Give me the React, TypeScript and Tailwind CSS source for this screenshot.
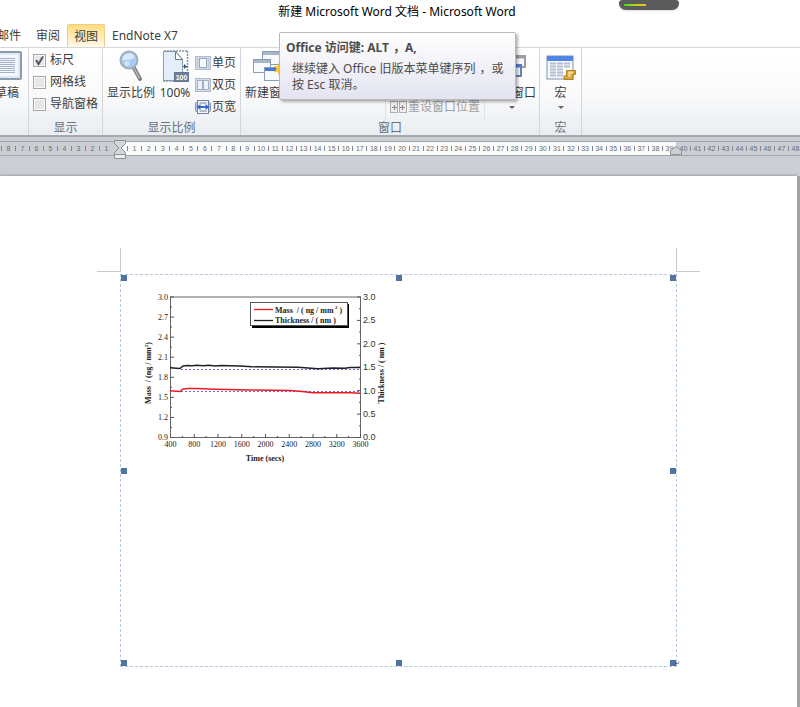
import { Fragment, type ReactNode } from 'react';
import clsx from 'clsx';

const leftRuler = [8, 7, 6, 5, 4, 3, 2, 1];
const textRuler = Array.from({ length: 39 }, (_, i) => i + 1);
const rightRuler = Array.from({ length: 9 }, (_, i) => i + 40);

const massTicks = ['3.0', '2.7', '2.4', '2.1', '1.8', '1.5', '1.2', '0.9'];
const thicknessTicks = ['3.0', '2.5', '2.0', '1.5', '1.0', '0.5', '0.0'];
const timeTicks = [400, 800, 1200, 1600, 2000, 2400, 2800, 3200, 3600];

function DraftIcon() {
  return (
    <svg width="30" height="30" viewBox="0 0 30 30">
      <rect x="1" y="1" width="28" height="27" rx="1" fill="#dfe7f1" stroke="#8c9bb0" strokeWidth="2" />
      <rect x="4" y="4" width="22" height="21" fill="#f4f8fc" />
      <path d="M6 7.500h17M6 9.500h17M6 11.500h17M6 13.500h17M6 15.500h17M6 17.500h17M6 19.500h17M6 21.500h17" stroke="#a3b2ca" />
    </svg>
  );
}

function ZoomIcon() {
  return (
    <svg width="30" height="32" viewBox="0 0 30 32">
      <path d="M18 18l6 11" stroke="#7d7d80" strokeWidth="4" strokeLinecap="round" />
      <path d="M18 18l5.500 10.500" stroke="#bdbdc0" strokeWidth="1.500" />
      <circle cx="13" cy="10" r="8.500" fill="#a9cdf0" stroke="#a4aebb" strokeWidth="2" />
      <path d="M6.500 10.500a6.500 6.500 0 0 1 12-4c-2 4-8 3-12 4z" fill="#d8eafa" />
      <circle cx="11" cy="13.500" r="2.500" fill="#cfe4f8" />
    </svg>
  );
}

function HundredIcon() {
  return (
    <svg width="28" height="32" viewBox="0 0 28 32">
      <path d="M2.500 1.500h12l7 8v21h-19z" fill="#e4eef9" stroke="#8c9cb3" />
      <path d="M14.500 1.500v8h7z" fill="#fff" stroke="#66788f" />
      <path d="M3 1h24M26.500 1v20M2 31h12" stroke="#8593a8" strokeWidth="1.500" strokeDasharray="2 1" />
      <path d="M22 16.500h5" stroke="#3e5675" />
      <path d="M23 14l3 2.500-3 2.500z" fill="#3e5675" />
      <rect x="13.500" y="22.500" width="14" height="9" fill="#6f829b" stroke="#61758f" />
      <text x="20.500" y="30" textAnchor="middle" fontSize="7" fontWeight="700" fontFamily="Liberation Sans, sans-serif" fill="#fff">100</text>
    </svg>
  );
}

function PageIcon({ kind }: { kind: 'one' | 'two' | 'width' }) {
  return (
    <svg width="16" height="16" viewBox="0 0 16 16" className="shrink-0">
      {kind !== 'width' && (
        <rect x=".5" y="1.500" width="15" height="13" fill="#d3dce8" stroke="#b0bccd" />
      )}
      {kind === 'one' && (
        <>
          <rect x="4.500" y="3.500" width="7" height="9" fill="#f7fafd" stroke="#98a7bd" />
          <path d="M2.500 3v10M13.500 3v10" stroke="#bcc8d8" />
        </>
      )}
      {kind === 'two' && (
        <>
          <rect x="2.500" y="3.500" width="5" height="9" fill="#eef3f9" stroke="#a3b0c4" />
          <rect x="8.500" y="3.500" width="5" height="9" fill="#eef3f9" stroke="#a3b0c4" />
        </>
      )}
      {kind === 'width' && (
        <>
          <rect x=".5" y="3.500" width="15" height="9" rx="1" fill="#b9c8de" stroke="#8297b8" />
          <rect x="2.500" y="1.500" width="11" height="13" fill="#f4f8fd" stroke="#6c82a5" />
          <path d="M4.500 4h7M4.500 12h7" stroke="#6c7f9d" />
          <path d="M1.500 8l4-3v2h5V5l4 3-4 3V9h-5v2z" fill="#3468cc" />
        </>
      )}
    </svg>
  );
}

function MiniWindow({ x, y, blue }: { x: number; y: number; blue?: boolean }) {
  return (
    <>
      <rect x={x + 0.5} y={y + 0.5} width="17" height="13" fill="#f6f9fd" stroke="#8c9cb4" />
      <rect x={x + 1} y={y + 1} width="16" height="3" fill={blue ? '#4478dd' : '#a9b6c8'} />
    </>
  );
}

function WindowsIcon() {
  return (
    <svg width="32" height="32" viewBox="0 0 32 32">
      <MiniWindow x={9} y={1} />
      <MiniWindow x={0} y={9} />
      <MiniWindow x={11} y={17} blue />
      <path d="M26 13l1 4 4-1-3 3 3 3-4-1-1 4-1-4-4 1 3-3-3-3 4 1z" fill="#ffd028" stroke="#f0a510" strokeWidth=".5" />
    </svg>
  );
}

function SwitchIcon() {
  return (
    <svg width="30" height="32" viewBox="0 0 30 32">
      <rect x="9" y="6" width="19" height="11" fill="#fafafa" stroke="#9b9da1" strokeWidth="2" />
      <path d="M8 7h21" stroke="#9b9da1" strokeWidth="3" />
      <rect x="5" y="15" width="19" height="11" fill="#eef5fd" stroke="#6883a8" strokeWidth="2" />
      <path d="M4 16h21" stroke="#4a7ee0" strokeWidth="3" />
    </svg>
  );
}

function MacroIcon() {
  return (
    <svg width="30" height="30" viewBox="0 0 30 30">
      <rect x="1" y="5" width="26" height="23" fill="#f6f9fd" stroke="#7f93b2" />
      <rect x="1" y="5" width="26" height="5" fill="#5286e6" />
      <path d="M4 12.500h6M11 12.500h6M18 12.500h6M4 15.500h6M11 15.500h6M18 15.500h6M4 18.500h6M11 18.500h6M4 21.500h6M11 21.500h6M4 24.500h6M11 24.500h6" stroke="#b4bfd4" strokeWidth="2" />
      <path d="M20.500 19.500h9v4h-2.500v5h-9v-3.500h2.500z" fill="#dba638" stroke="#b08226" />
      <path d="M22 21.500h5M23.500 22v4" fill="none" stroke="#f8df8c" strokeWidth="2" />
    </svg>
  );
}

function ResetIcon() {
  return (
    <svg width="17" height="14" viewBox="0 0 17 14">
      <rect x=".5" y="1.500" width="7" height="11" fill="#eee" stroke="#b0b0b0" />
      <rect x="9.500" y="1.500" width="7" height="11" fill="#eee" stroke="#b0b0b0" />
      <path d="M2 7.500h5M4.500 5v5M10 7.500h5M12.500 5v5" stroke="#8a8a8a" />
    </svg>
  );
}

function Arrow() {
  return <span className="mt-1 block border-x-3 border-t-3 border-x-transparent border-t-[#666]" />;
}

function Group({ label, className, children }: { label: string; className?: string; children: ReactNode }) {
  return (
    <section className={clsx('flex shrink-0 flex-col border-r border-[#d3d7dc]', className)}>
      <div className="flex h-[72px] shrink-0">{children}</div>
      <h2 className="shrink-0 text-center leading-4 text-[#68707c]">{label}</h2>
    </section>
  );
}

function BigButton({ icon, label, arrow, className }: { icon: ReactNode; label: string; arrow?: boolean; className?: string }) {
  return (
    <button className={clsx('flex shrink-0 flex-col items-center whitespace-nowrap', className)}>
      <span className="flex h-9 items-center">{icon}</span>
      <span className="leading-[18px]">{label}</span>
      {arrow && <Arrow />}
    </button>
  );
}

function Check({ label, checked }: { label: string; checked?: boolean }) {
  return (
    <label className="flex h-[22px] items-center gap-1">
      <input
        type="checkbox"
        defaultChecked={checked}
        className="peer size-[13px] appearance-none border border-[#a4a7ab] bg-[#e6e7e8] shadow-[inset_0_0_0_1px_#fafafa]"
      />
      <svg viewBox="0 0 13 13" className="pointer-events-none invisible -ml-[17px] size-[13px] peer-checked:visible">
        <path d="M3 6l2.500 4L10 2.500" fill="none" stroke="#55585f" strokeWidth="2" />
      </svg>
      {label}
    </label>
  );
}

function RulerCell({ n, className }: { n: number; className?: string }) {
  return (
    <span className={clsx('flex h-full items-center', className)}>
      <i className="h-[5px] w-px shrink-0 bg-[#84888e]" />
      <span className="flex min-w-0 flex-1 justify-center">{n}</span>
    </span>
  );
}

function Ruler() {
  return (
    <div className="flex h-[39px] items-start bg-[#cbcfd4] pt-1">
      <div className="flex h-[15px] flex-1 border-y border-[#a1a6ad] font-['Liberation_Sans',sans-serif] text-[7px] leading-none text-[#6a6e74]">
        <div className="flex w-[120px] shrink-0 justify-end pr-[7px]">
          {leftRuler.map((n) => <RulerCell key={n} n={n} className="w-[14px] shrink-0" />)}
        </div>
        <div className="relative flex w-[556px] shrink-0 bg-[#fafafa] pl-[7px]">
          {textRuler.map((n) => <RulerCell key={n} n={n} className="min-w-0 flex-1" />)}
          <svg width="12" height="19" viewBox="0 0 12 19" className="absolute -top-[2px] -left-[6px]">
            <path d="M.5 .5h11v3l-4.500 4.500 4.500 4.500v2H.5v-2L5 8 .5 3.500z" fill="#d5d6d9" stroke="#8d9095" />
            <path d="M.5 14.500h11v4H.5z" fill="#eceded" stroke="#8d9095" />
          </svg>
          <svg width="12" height="10" viewBox="0 0 12 10" className="absolute -right-[6px] -bottom-[1px]">
            <path d="M.5 8.500v-4L6 .5l5.500 4v4z" fill="#d0d1d3" stroke="#8d9095" />
          </svg>
        </div>
        <div className="flex min-w-0 flex-1 overflow-hidden">
          {rightRuler.map((n) => <RulerCell key={n} n={n} className="w-[14px] shrink-0 first:[&>i]:invisible" />)}
        </div>
      </div>
    </div>
  );
}

function Chart() {
  return (
    <svg width="270" height="185" viewBox="130 285 270 185" fontFamily="Liberation Serif, serif" fontSize="8" fill="#222">
      <rect x="170.500" y="297" width="190" height="140.500" fill="none" stroke="#666" />
      {massTicks.map((t, i) => (
        <Fragment key={t}>
          <text x="168" y={299.5 + i * 20.07} textAnchor="end">{t}</text>
          <path d={`M170 ${297 + i * 20.07}h4${i < 7 ? 'm-4 10h2' : ''}`} stroke="#555" />
        </Fragment>
      ))}
      {thicknessTicks.map((t, i) => (
        <Fragment key={t}>
          <text x="363" y={(i === 6 ? 299 : 300) + i * 23.42} fontSize="9" fontFamily="Liberation Sans, sans-serif" fill="#333">{t}</text>
          <path d={`M361 ${297 + i * 23.42}h-4${i < 6 ? 'm4 11.700h-2' : ''}`} stroke="#555" />
        </Fragment>
      ))}
      {timeTicks.map((t, i) => (
        <Fragment key={t}>
          <text x={170.5 + i * 23.75} y="447" textAnchor="middle">{t}</text>
          <path d={`M${170.5 + i * 23.75} 438v-4${i < 8 ? 'm11.900 4v-2' : ''}`} stroke="#555" />
        </Fragment>
      ))}

      <path d="M181 369.500H360M181 391.500H360" stroke="#6a6af0" strokeDasharray="2 2" />
      <path
        d="M170 367.800L180 368.500L183 366L187 365.500L192 365.800L197 365.200L203 365.700L209 365.300L215 366L221 365.500L240 366L252 366.800L275 367L298 367.200L318 368.700L333 368L345 368.200L350 367.500H360"
        fill="none" stroke="#222" strokeWidth="1.400"
      />
      <path
        d="M170 390.700L180 391.500L183 389L188 388.500L197 388.500L215 389.200L250 390L270 390.300L290 390.500L302 391.500L313 392.700H350L360 393.300"
        fill="none" stroke="#f01820" strokeWidth="1.400"
      />

      <rect x="252" y="304" width="97" height="24" fill="#000" />
      <rect x="250.500" y="302.500" width="97" height="23" fill="#fff" stroke="#555" />
      <path d="M254 309.500h19" stroke="#f01820" strokeWidth="1.300" />
      <path d="M254 320.500h19" stroke="#222" strokeWidth="1.300" />
      <g fontWeight="700">
        <text x="275" y="313" xmlSpace="preserve">Mass  / ( ng / mm<tspan dy="-4" fontSize="5"> 2</tspan><tspan dy="4"> )</tspan></text>
        <text x="275" y="323">Thickness / ( nm )</text>
        <text x="265" y="461" textAnchor="middle">Time (secs)</text>
        <text transform="translate(151 373) rotate(-90)" textAnchor="middle" xmlSpace="preserve">Mass  / (ng / mm<tspan dy="-3" fontSize="5">2</tspan><tspan dy="3">)</tspan></text>
        <text transform="translate(384 373) rotate(-90)" textAnchor="middle">Thickness / ( nm )</text>
      </g>
    </svg>
  );
}

// resize grips on the drawing canvas
const handles = [
  'left-0 top-0',
  'left-1/2 top-0 -translate-x-1/2',
  'right-0 top-0',
  'left-0 top-1/2 -translate-y-1/2',
  'right-0 top-1/2 -translate-y-1/2',
  'left-0 bottom-0',
  'left-1/2 bottom-0 -translate-x-1/2',
  'right-0 bottom-0',
];

// full-width comma with room on its left
function Comma() {
  return <span className="pl-1 font-['Noto_Sans_CJK_SC',sans-serif]">，</span>;
}

export default function App() {
  return (
    <div lang="zh-CN" className="relative flex min-h-screen flex-col overflow-x-hidden bg-white font-['Noto_Sans','Noto_Sans_CJK_SC',sans-serif] text-[12px] text-[#3c3c3c]">
      <header className="relative flex h-6 items-end justify-center pr-1.5 text-black">
        <h1 className="leading-6">新建 Microsoft Word 文档 - Microsoft Word</h1>
        <div className="absolute top-0 right-[121px] h-[10px] w-[60px] rounded-b-lg rounded-t-sm bg-[#5b5b5b] px-[5px] pt-1 shadow">
          <div className="h-[2px] w-[22px] bg-linear-to-r from-[#20e020] to-[#ffc010]" />
        </div>
      </header>

      <nav className="flex h-[23px] shrink-0 items-stretch leading-6">
        <a href="#mail" className="flex w-[21px] justify-end overflow-hidden whitespace-nowrap">邮件</a>
        <a href="#review" className="ml-[15px]">审阅</a>
        <a href="#view" className="ml-[7px] w-[38px] rounded-t-xs border border-b-0 border-[#f0cf85] bg-linear-to-b from-[#ffdc7c] to-[#fffaec] text-center">视图</a>
        <a href="#endnote" className="ml-[7px]">EndNote X7</a>
      </nav>

      <div className="flex h-[90px] shrink-0 border-t border-b-2 border-t-[#d5d7da] border-b-[#a6abb1] bg-linear-to-b from-white via-[#fbfbfc] to-[#e9edf1]">
        <section className="flex w-[29px] shrink-0 justify-end overflow-hidden border-r border-[#d3d7dc] pr-[6px]">
          <BigButton icon={<DraftIcon />} label="草稿" className="w-[30px]" />
        </section>
        <Group label="显示" className="w-[74px]">
          <div className="pt-px pl-1">
            <Check label="标尺" checked />
            <Check label="网格线" />
            <Check label="导航窗格" />
          </div>
        </Group>
        <Group label="显示比例" className="w-[138px]">
          <BigButton icon={<ZoomIcon />} label="显示比例" className="w-14" />
          <BigButton icon={<HundredIcon />} label="100%" className="w-8" />
          <div className="flex flex-col pt-1 pl-1">
            <button className="flex h-[22px] items-center gap-px whitespace-nowrap"><PageIcon kind="one" />单页</button>
            <button className="flex h-[22px] items-center gap-px whitespace-nowrap"><PageIcon kind="two" />双页</button>
            <button className="flex h-[22px] items-center gap-px whitespace-nowrap"><PageIcon kind="width" />页宽</button>
          </div>
        </Group>
        <Group label="窗口" className="w-[299px]">
          <BigButton icon={<WindowsIcon />} label="新建窗口" className="w-14" />
          <div className="ml-auto flex items-end border-x border-[#dfe2e6] px-1 pb-[2px]">
            <button disabled className="flex h-[22px] items-center gap-px whitespace-nowrap text-[#a0a0a0]"><ResetIcon />重设窗口位置</button>
          </div>
          <BigButton icon={<SwitchIcon />} label="切换窗口" arrow className="w-[54px]" />
        </Group>
        <Group label="宏" className="w-[42px]">
          <BigButton icon={<MacroIcon />} label="宏" arrow className="w-full" />
        </Group>
      </div>

      <Ruler />

      <div className="flex flex-1 bg-[#a0a5ab] pr-[3px]">
        <main className="flex-1 bg-white pt-[72px] shadow-[0_-1px_2px_#9da2a8]">
          <div className="ml-[97px] flex h-6 w-[603px] justify-between">
            <div className="w-6 border-r border-b border-[#c9c9c9]" />
            <div className="w-6 border-b border-l border-[#c9c9c9]" />
          </div>
          <div className="relative mt-[2px] ml-[120px] h-[393px] w-[557px] border border-dashed border-[#b4c8e0] pt-[10px] pl-[9px]">
            {handles.map((pos) => (
              <span key={pos} className={clsx('absolute size-[6px] bg-[#50749f]', pos)} />
            ))}
            <Chart />
            <span className="absolute -right-1 bottom-0 text-[6px] leading-none">↵</span>
          </div>
        </main>
      </div>

      <div role="tooltip" className="absolute top-8 left-[279px] w-[237px] rounded-xs border border-[#b9b9bd] bg-linear-to-b from-white to-[#e3e4f0] p-[6px] leading-4 text-[#4c4c4c] shadow-[2px_2px_3px_#0000004d]">
        <p className="font-bold">Office 访问键: ALT<Comma />A,</p>
        <p className="mt-1 pl-[6px] whitespace-nowrap">
          继续键入 Office 旧版本菜单键序列<Comma />或
          <br />
          按 Esc 取消。
        </p>
      </div>
    </div>
  );
}
